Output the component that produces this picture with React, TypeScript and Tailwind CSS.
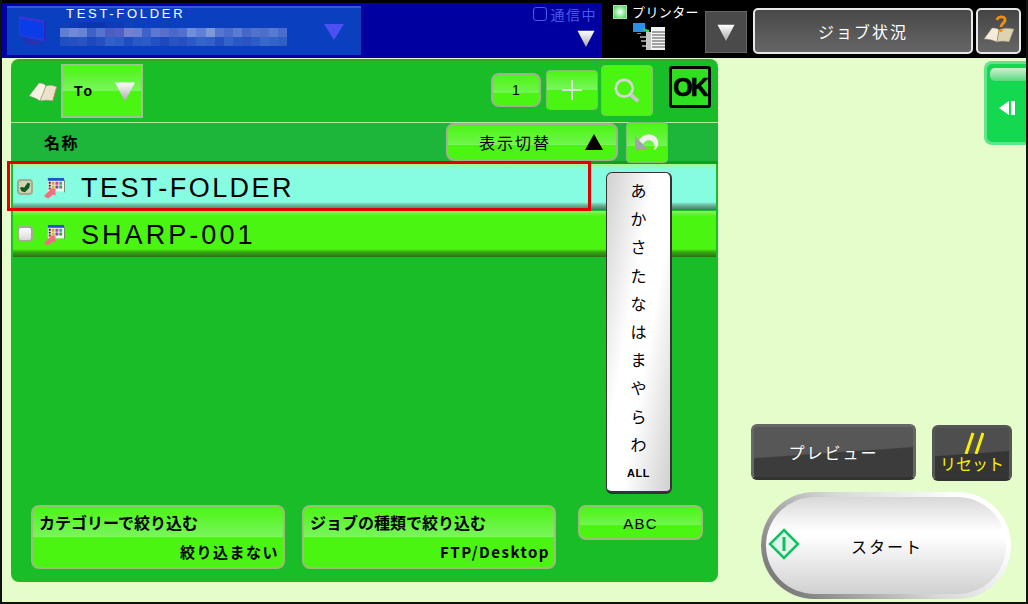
const jp = "font-['Noto_Sans_CJK_JP','Liberation_Sans',sans-serif]";
const lat = "font-['Liberation_Sans','Noto_Sans_CJK_JP',sans-serif]";

const gloss = 'bg-[linear-gradient(#4bf512_0%,#6ef54a_55%,#7df55e_58%,#4bf512_59%,#4bf512_100%)]';

const blurRows = [
  ['#0f40b8', '#0c3ab8', '#0c38b4', '#0a34b0', '#0a34b0', '#0e3cb8', '#0e3cb8', '#1040bc'],
  ['#5f7fd2', '#6f8ad6', '#6684d4', '#3c62c8', '#5474cf', '#4a5dc4', '#5060c4', '#7480d0', '#6a80d2', '#3e62c8', '#5c78d0', '#566fcc', '#4a68ca', '#4f70ce', '#6f8fda', '#5f80d6', '#7e98dc', '#5576d0', '#4a6ccc', '#5c7cd2', '#4468ca', '#5272ce', '#4e6ecc', '#587ad2', '#4a6ccc'],
  ['#1f4fc2', '#2450c2', '#2854c4', '#1c4abe', '#2450c2', '#3060c8', '#2c5cc6', '#1f4cc0', '#2a58c6', '#2c5ac6', '#2050c2', '#1c4abe', '#2854c4', '#2450c2', '#2a5ac8', '#3464ca', '#3060c8', '#2450c2', '#3262ca', '#2858c6', '#2854c4', '#2c5cc8', '#3868cc', '#3464ca', '#2e60c8'],
];

const Triangle = ({ className = '' }: { className?: string }) => (
  <svg viewBox="0 0 20 20" className={className}>
    <defs>
      <linearGradient id="tri" x1="0" y1="0" x2="0" y2="1">
        <stop offset="0" stopColor="#ffffff" />
        <stop offset="1" stopColor="#a8a8a8" />
      </linearGradient>
    </defs>
    <path d="M0 1h20L10 20z" fill="url(#tri)" />
  </svg>
);

const Monitor = () => (
  <svg viewBox="0 0 32 32" className="w-[31px] h-[31px]">
    <path d="M2 1l26 5 2 1v19l-2 1L2 21z" fill="#3a34d8" />
    <path d="M3 4l24 4v17L3 20z" fill="#0a3ce8" />
    <path d="M28 6l2 1v19l-2 1z" fill="#2a28b8" />
    <path d="M7 24l8 2 12 2-4 2-8 1-7-3z" fill="#2c30b0" />
  </svg>
);

const Book = () => (
  <svg viewBox="0 0 32 22" className="w-[32px] h-[22px]">
    <path d="M1 15L11 2c3 0 6 1 7 3l-6 15C8 17 4 16 1 15z" fill="#f8f2e2" stroke="#8c8672" strokeWidth=".5" />
    <path d="M18 5c3-1 7-1 11 1l-4 14c-4-1-9-1-13 0z" fill="#ece2ca" stroke="#8c8672" strokeWidth=".5" />
    <path d="M29 6l-4 14-1 1 4-14z" fill="#d06838" />
  </svg>
);

const HelpBook = () => (
  <svg viewBox="0 0 32 32" className="w-[32px] h-[32px]">
    <path d="M1 24L9 13c3 0 5 0 7 2l-2 12c-4-2-9-3-13-3z" fill="#f4ecd6" stroke="#8a8470" strokeWidth=".5" />
    <path d="M16 15c4-2 9-2 15-1l-5 13c-4-1-9-1-12 0z" fill="#dfd2b0" stroke="#8a8470" strokeWidth=".5" />
    <path d="M14 5c1-4 7-4 8-1 1 4-4 4-4 8" fill="none" stroke="#f09010" strokeWidth="2.8" />
    <circle cx="18" cy="15.5" r="1.7" fill="#f09010" />
  </svg>
);

const PrinterIcon = () => (
  <svg viewBox="0 0 32 27" className="w-[32px] h-[27px]">
    <rect x="0" y="0" width="12" height="9" fill="#2b8fe8" />
    <path d="M9 5l7 7v-5z" fill="#30e040" />
    <path d="M4 10h4v1H4zM7 13h6v2H7zM8 17h5v2H8zM9 22h4v2H9z" fill="#8a8a8a" />
    <path d="M13 9h5v18h-5z" fill="#c8c8c8" />
    <path d="M18 4h14v23H18z" fill="#f4f4f4" />
    <path d="M19 9h13M19 12h13M19 15h13M19 18h13M19 21h13M19 24h13" stroke="#505050" strokeWidth="1.2" />
  </svg>
);

const Magnifier = () => (
  <svg viewBox="0 0 30 30" className="w-[28px] h-[28px]">
    <circle cx="12" cy="12" r="9" fill="none" stroke="#d6d6d6" strokeWidth="3" />
    <path d="M19 19l8 7" stroke="#c8c8c8" strokeWidth="4" />
  </svg>
);

const BackArrow = () => (
  <svg viewBox="0 0 26 20" className="w-[26px] h-[20px]">
    <path d="M5 9C8 1 21 0 24 9c1 4-1 8-4 9 1-3 1-6-1-8-3-3-8-2-10 2z" fill="#f0f0f0" />
    <path d="M1 4l13 14H1z" fill="#a4a4a4" />
  </svg>
);

const Check = () => (
  <svg viewBox="0 0 14 14" className="w-[12px] h-[12px]">
    <path d="M1 8l3-1 2 1 4-6 3 1-1 5-5 5-4-1z" fill="#0f5a1c" />
  </svg>
);

const AddressIcon = () => (
  <svg viewBox="0 0 22 22" className="w-[21px] h-[21px]">
    <rect x="4" y="1" width="17" height="14" fill="#f4f4f4" />
    <rect x="4" y="1" width="17" height="3" fill="#1f55c8" />
    <rect x="21" y="3" width="1" height="13" fill="#7a8a70" />
    <path d="M5 5h2v2H5zM5 8h2v2H5zM5 11h2v2H5z" fill="#222" />
    <path d="M8 5h3v3H8z" fill="#d8a020" />
    <path d="M12 5h3v3h-3z" fill="#c040b0" />
    <path d="M16 5h3v3h-3z" fill="#40a0a0" />
    <path d="M8 9h3v3H8z" fill="#c8c020" />
    <path d="M12 9h3v3h-3z" fill="#8040c0" />
    <path d="M16 9h3v3h-3z" fill="#40a040" />
    <path d="M0 20l6-6-2-2h8v8l-2-2-6 5z" fill="#f07080" />
  </svg>
);

const Row = ({ name, tracking, selected }: { name: string; tracking: string; selected?: boolean }) => (
  <div
    className={`h-[46px] flex items-center ${
      selected
        ? 'bg-[linear-gradient(#a6f58c_0px,#86fde0_5px,#86fde0_38px,#6fb8a0_41px,#3a7c55_46px)]'
        : 'bg-[linear-gradient(#90f060_0px,#4bf512_5px,#4bf512_38px,#36a810_41px,#2a7018_46px)]'
    }`}
  >
    <div
      className={`ml-[4px] w-[16px] h-[16px] rounded-[4px] border-2 border-[#a3ad8c] flex items-center justify-center ${
        selected ? 'bg-[#cfd4b8]' : 'bg-[linear-gradient(#ffffff,#d8d8d8)]'
      }`}
    >
      {selected && <Check />}
    </div>
    <div className="ml-[11px]">
      <AddressIcon />
    </div>
    <span className={`${lat} ${tracking} ml-[16px] mt-[2px] text-[27px] leading-none text-black`}>{name}</span>
  </div>
);

const Kana = ['あ', 'か', 'さ', 'た', 'な', 'は', 'ま', 'や', 'ら', 'わ'];

const FilterButton = ({ title, value, className }: { title: string; value: string; className: string }) => (
  <div className={`${className} h-[64px] rounded-[8px] border-2 border-[#9dbb7c] overflow-hidden flex flex-col ${jp} font-bold text-black bg-[linear-gradient(#4bf512_0%,#7af55e_50%,#4bf512_51%)]`}>
    <div className="h-[29px] flex items-center pl-[6px] text-[16px]">{title}</div>
    <div className="h-[28px] mt-[2px] flex items-center justify-end pr-[4px] text-[15px] tracking-[1.5px]">{value}</div>
  </div>
);

export default function App() {
  return (
    <div className={`w-[1028px] h-[604px] relative overflow-hidden flex flex-col bg-[#e4fdca] border-x-2 border-b-2 border-[#111] ${jp}`}>
      {/* top bar */}
      <header className="h-[58px] shrink-0 flex bg-black pt-[3px]">
        <div className="w-[600px] bg-[#0000a0] flex pt-[3px] pl-[5px]">
          <div className="w-[354px] h-[49px] bg-[#0a40c0] border-t-2 border-[#2a5cdc] flex relative">
            <div className="ml-[10px] mt-[7px]">
              <Monitor />
            </div>
            <div className="ml-[12px] w-[240px]">
              <div className={`${lat} text-[13px] leading-[14px] tracking-[2.7px] text-white pl-[6px] mt-[-1px]`}>TEST-FOLDER</div>
              <div className="mt-[1px] flex flex-col">
                {blurRows.map((cells, r) => (
                  <div key={r} className={`flex ${r === 0 ? 'h-[6px]' : 'h-[9px]'}`}>
                    {cells.map((c, i) => (
                      <div key={i} className="w-[9.1px]" style={{ backgroundColor: c }} />
                    ))}
                  </div>
                ))}
              </div>
            </div>
            <svg viewBox="0 0 20 16" className="w-[20px] h-[16px] ml-[24px] mt-[16px]">
              <path d="M0 0h20L10 16z" fill="#4c50f0" />
            </svg>
          </div>
          <div className="flex-1 flex flex-col items-end pr-[5px] pt-[1px]">
            <div className="flex items-center gap-[4px] text-[14px] leading-[14px] tracking-[1.5px] text-[#4a58f0]">
              <span className="w-[14px] h-[14px] rounded-[3px] border border-[#4a58f0]" />
              通信中
            </div>
            <Triangle className="w-[20px] h-[17px] mt-[9px] mr-[1px]" />
          </div>
        </div>
        <div className="flex-1 flex">
          <div className="w-[103px] flex flex-col pl-[11px] pt-[2px]">
            <div className="flex items-center gap-[5px] text-[13px] leading-[14px] tracking-[0.4px] text-white">
              <span className="w-[14px] h-[14px] bg-[radial-gradient(#ffffff,#30d840)] border border-[#b0e0b0]" />
              プリンター
            </div>
            <div className="mt-[4px] ml-[20px]">
              <PrinterIcon />
            </div>
          </div>
          <div className="w-[42px] h-[42px] mt-[8px] bg-[#4a4a4a] border border-[#666] flex items-center justify-center">
            <Triangle className="w-[20px] h-[17px]" />
          </div>
          <div className="ml-[6px] w-[220px] h-[46px] mt-[5px] rounded-[5px] border-2 border-[#e8e8e8] bg-[linear-gradient(#484848,#666)] flex items-center justify-center text-white text-[16px] tracking-[2px]">
            ジョブ状況
          </div>
          <div className="ml-[3px] w-[45px] h-[46px] mt-[5px] rounded-[5px] border-2 border-[#e8e8e8] bg-[linear-gradient(#444,#666)] flex items-center justify-center">
            <HelpBook />
          </div>
        </div>
      </header>

      {/* main */}
      <div className="flex-1 flex pl-[9px] pt-[1px] relative">
        <section className="w-[707px] h-[523px] rounded-[8px] bg-[#18bd28] border-t-2 border-[#2faa2f] overflow-hidden flex flex-col">
          <div className="h-[61px] shrink-0 flex relative">
            <div className="ml-[17px] mt-[20px]">
              <Book />
            </div>
            <div className="ml-[1px] mt-[3px] w-[82px] h-[54px] border-2 border-[#a0c090] bg-[linear-gradient(#4bf512_0%,#7af55e_50%,#4bf512_51%)] flex items-center justify-between pl-[11px] pr-[6px]">
              <span className={`${lat} text-[14px] font-bold tracking-[2px] text-black`}>To</span>
              <Triangle className="w-[20px] h-[21px]" />
            </div>
            <div className="ml-auto flex">
              <div className={`mt-[12px] w-[50px] h-[34px] rounded-[8px] border-2 border-[#a0b090] ${gloss} flex items-center justify-center text-[14px] ${lat} text-black`}>
                1
              </div>
              <div className="ml-[5px] mt-[9px] w-[52px] h-[40px] rounded-[4px] border border-[#80c070] bg-[linear-gradient(#4bf512_0%,#7af55e_50%,#4bf512_51%)] flex items-center justify-center">
                <svg viewBox="0 0 20 20" className="w-[20px] h-[20px]">
                  <path d="M9 0h2v9h9v2h-9v9H9v-9H0V9h9z" fill="#d8e4d0" />
                </svg>
              </div>
              <div className="ml-[3px] mt-[4px] w-[52px] h-[51px] rounded-[4px] border border-[#80c070] bg-[#4bf512] flex items-center justify-center">
                <Magnifier />
              </div>
              <div className="ml-[16px] mr-[7px] mt-[5px] w-[42px] h-[42px] rounded-[3px] border-[3px] border-black bg-[#2ee020] flex items-center justify-center">
                <span className={`${lat} font-bold text-[25px] leading-none tracking-[-2px] text-black [-webkit-text-stroke:0.7px_black]`}>OK</span>
              </div>
            </div>
          </div>

          <div className="h-[42px] shrink-0 bg-[#1db53a] border-t border-[#b0e8a0] border-b-[3px] border-b-[#10a020] flex items-center relative">
            <span className="ml-[33px] text-[16px] font-bold tracking-[1.5px] text-black">名称</span>
            <div className="ml-auto flex items-center mr-[50px]">
              <div className={`w-[172px] h-[38px] rounded-[8px] border-2 border-[#a0b090] ${gloss} flex items-center text-[16px] tracking-[2px] text-black`}>
                <span className="ml-[31px]">表示切替</span>
                <svg viewBox="0 0 18 16" className="w-[18px] h-[16px] ml-[34px]">
                  <path d="M9 0l9 16H0z" fill="#000" />
                </svg>
              </div>
              <div className={`ml-[8px] w-[42px] h-[41px] rounded-[4px] border border-[#80c070] ${gloss} flex items-center justify-center`}>
                <BackArrow />
              </div>
            </div>
          </div>

          <div className="pl-[2px] pr-[2px] flex flex-col gap-[1px]">
            <Row name="TEST-FOLDER" tracking="tracking-[2.45px]" selected />
            <Row name="SHARP-001" tracking="tracking-[3.05px]" />
          </div>

          <div className="mt-auto mb-[13px] flex items-start pl-[20px]">
            <FilterButton title="カテゴリーで絞り込む" value="絞り込まない" className="w-[254px]" />
            <FilterButton title="ジョブの種類で絞り込む" value="FTP/Desktop" className="ml-[17px] w-[254px]" />
            <div className={`ml-[22px] w-[125px] h-[35px] rounded-[8px] border-2 border-[#9dbb7c] ${gloss} flex items-center justify-center pt-[3px] ${lat} text-[15px] tracking-[1.2px] text-black`}>
              ABC
            </div>
          </div>
        </section>

        {/* right column */}
        <aside className="flex-1 flex flex-col items-end">
          <div className="w-[42px] h-[84px] mt-[2px] rounded-l-[8px] border-[3px] border-r-0 border-[#5ee68a] bg-[#14d850] flex flex-col items-center">
            <div className="w-full h-[13px] ml-[6px] mt-[4px] rounded-l-[5px] bg-[linear-gradient(#d0f0d0,#58d880)]" />
            <svg viewBox="0 0 16 14" className="w-[16px] h-[14px] mt-[20px]">
              <path d="M10 0v14L0 7zM12 0h4v14h-4z" fill="#fff" />
            </svg>
          </div>
          <div className="mt-auto mb-[3px] flex flex-col items-end pr-[14px]">
            <div className="flex items-start">
              <div className="w-[165px] h-[56px] rounded-[6px] border-[3px] border-[#666] border-b-[#333] bg-[linear-gradient(176deg,#575757_50%,#3c3c3c_52%)] flex items-center justify-center text-white text-[16px] tracking-[2px]">
                プレビュー
              </div>
              <div className="ml-[16px] w-[80px] h-[56px] mt-[1px] rounded-[6px] border-[3px] border-[#555] border-b-[#333] bg-[linear-gradient(176deg,#4e4e4e_50%,#353535_52%)] flex flex-col items-center justify-center text-[#f8f000]">
                <svg viewBox="0 0 24 22" className="w-[24px] h-[22px] -mt-[2px]">
                  <path d="M6 22L13 1M16 22L23 1" stroke="#f8f000" strokeWidth="3" />
                </svg>
                <span className="text-[16px] leading-[18px]">リセット</span>
              </div>
            </div>
            <div className="relative mt-[11px] mr-[1px] w-[250px] h-[107px] rounded-[54px] p-[5px] bg-[linear-gradient(225deg,#ffffff_15%,#d8d8d8_50%,#7c7c7c_90%)]">
              <div className="w-full h-full rounded-[49px] bg-[linear-gradient(#d8d8d8_0%,#ffffff_35%,#ffffff_40%,#d0d0d0_100%)] flex items-center justify-center pl-[2px] text-[16px] tracking-[2px] text-black">
                スタート
              </div>
              <svg viewBox="0 0 32 32" className="absolute left-[7px] top-[36px] w-[32px] h-[32px]">
                <path d="M16 2l14 14-14 14L2 16z" fill="#e0f4ea" stroke="#10c060" strokeWidth="2.5" />
                <path d="M16 9v14" stroke="#10c060" strokeWidth="3" />
              </svg>
            </div>
          </div>
        </aside>

        {/* kana index strip, lies over the list */}
        <div className="absolute left-[604px] top-[114px] w-[66px] h-[322px] rounded-[6px] border border-[#333] border-b-[3px] border-r-2 bg-[linear-gradient(100deg,#d0d0d0,#ffffff_40%,#ffffff_60%,#d0d0d0)] flex flex-col items-center pt-[3px]">
          {Kana.map((k) => (
            <div key={k} className="h-[28.2px] flex items-center text-[16px] text-black">
              {k}
            </div>
          ))}
          <div className={`${lat} h-[30px] flex items-center text-[11px] font-bold text-black tracking-[0.5px]`}>ALL</div>
        </div>

        {/* selection outline */}
        <div className="absolute left-[5px] top-[103px] w-[584px] h-[50px] border-[3px] border-[#e00000]" />
      </div>
    </div>
  );
}
